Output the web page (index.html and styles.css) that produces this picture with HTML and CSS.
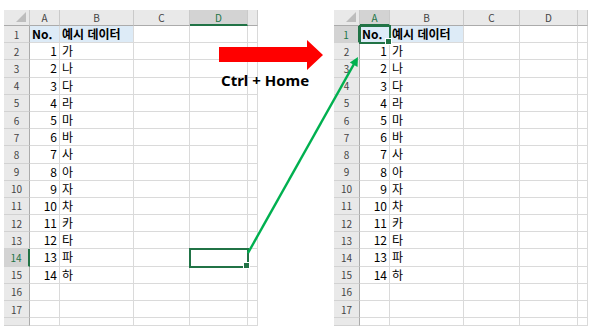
FILE: index.html
```html
<!DOCTYPE html>
<html lang="ko">
<head>
    <meta charset="UTF-8">
    <meta name="viewport" content="width=device-width, initial-scale=1.0">
    <title>Ctrl + Home</title>
    <link rel="stylesheet" href="styles.css">
</head>
<body>

<div class="stage">

    <!-- before: D14 selected -->
    <div class="sheet">
        <div class="hd corner"></div><div class="hd">A</div><div class="hd">B</div><div class="hd">C</div><div class="hd on">D</div><div class="hd"></div>
        <div class="rh">1</div><div class="c title">No.</div><div class="c title txt">예시 데이터</div><div class="c"></div><div class="c"></div><div class="c"></div>
        <div class="rh">2</div><div class="c num">1</div><div class="c txt">가</div><div class="c"></div><div class="c"></div><div class="c"></div>
        <div class="rh">3</div><div class="c num">2</div><div class="c txt">나</div><div class="c"></div><div class="c"></div><div class="c"></div>
        <div class="rh">4</div><div class="c num">3</div><div class="c txt">다</div><div class="c"></div><div class="c"></div><div class="c"></div>
        <div class="rh">5</div><div class="c num">4</div><div class="c txt">라</div><div class="c"></div><div class="c"></div><div class="c"></div>
        <div class="rh">6</div><div class="c num">5</div><div class="c txt">마</div><div class="c"></div><div class="c"></div><div class="c"></div>
        <div class="rh">7</div><div class="c num">6</div><div class="c txt">바</div><div class="c"></div><div class="c"></div><div class="c"></div>
        <div class="rh">8</div><div class="c num">7</div><div class="c txt">사</div><div class="c"></div><div class="c"></div><div class="c"></div>
        <div class="rh">9</div><div class="c num">8</div><div class="c txt">아</div><div class="c"></div><div class="c"></div><div class="c"></div>
        <div class="rh">10</div><div class="c num">9</div><div class="c txt">자</div><div class="c"></div><div class="c"></div><div class="c"></div>
        <div class="rh">11</div><div class="c num">10</div><div class="c txt">차</div><div class="c"></div><div class="c"></div><div class="c"></div>
        <div class="rh">12</div><div class="c num">11</div><div class="c txt">카</div><div class="c"></div><div class="c"></div><div class="c"></div>
        <div class="rh">13</div><div class="c num">12</div><div class="c txt">타</div><div class="c"></div><div class="c"></div><div class="c"></div>
        <div class="rh on">14</div><div class="c num">13</div><div class="c txt">파</div><div class="c"></div><div class="c sel"></div><div class="c"></div>
        <div class="rh">15</div><div class="c num">14</div><div class="c txt">하</div><div class="c"></div><div class="c"></div><div class="c"></div>
        <div class="rh">16</div><div class="c"></div><div class="c"></div><div class="c"></div><div class="c"></div><div class="c"></div>
        <div class="rh">17</div><div class="c"></div><div class="c"></div><div class="c"></div><div class="c"></div><div class="c"></div>
        <div class="rh"></div><div class="c"></div><div class="c"></div><div class="c"></div><div class="c"></div><div class="c"></div>
    </div>

    <!-- after: A1 selected -->
    <div class="sheet">
        <div class="hd corner"></div><div class="hd on">A</div><div class="hd">B</div><div class="hd">C</div><div class="hd">D</div><div class="hd"></div>
        <div class="rh on">1</div><div class="c title sel">No.</div><div class="c title txt">예시 데이터</div><div class="c"></div><div class="c"></div><div class="c"></div>
        <div class="rh">2</div><div class="c num">1</div><div class="c txt">가</div><div class="c"></div><div class="c"></div><div class="c"></div>
        <div class="rh">3</div><div class="c num">2</div><div class="c txt">나</div><div class="c"></div><div class="c"></div><div class="c"></div>
        <div class="rh">4</div><div class="c num">3</div><div class="c txt">다</div><div class="c"></div><div class="c"></div><div class="c"></div>
        <div class="rh">5</div><div class="c num">4</div><div class="c txt">라</div><div class="c"></div><div class="c"></div><div class="c"></div>
        <div class="rh">6</div><div class="c num">5</div><div class="c txt">마</div><div class="c"></div><div class="c"></div><div class="c"></div>
        <div class="rh">7</div><div class="c num">6</div><div class="c txt">바</div><div class="c"></div><div class="c"></div><div class="c"></div>
        <div class="rh">8</div><div class="c num">7</div><div class="c txt">사</div><div class="c"></div><div class="c"></div><div class="c"></div>
        <div class="rh">9</div><div class="c num">8</div><div class="c txt">아</div><div class="c"></div><div class="c"></div><div class="c"></div>
        <div class="rh">10</div><div class="c num">9</div><div class="c txt">자</div><div class="c"></div><div class="c"></div><div class="c"></div>
        <div class="rh">11</div><div class="c num">10</div><div class="c txt">차</div><div class="c"></div><div class="c"></div><div class="c"></div>
        <div class="rh">12</div><div class="c num">11</div><div class="c txt">카</div><div class="c"></div><div class="c"></div><div class="c"></div>
        <div class="rh">13</div><div class="c num">12</div><div class="c txt">타</div><div class="c"></div><div class="c"></div><div class="c"></div>
        <div class="rh">14</div><div class="c num">13</div><div class="c txt">파</div><div class="c"></div><div class="c"></div><div class="c"></div>
        <div class="rh">15</div><div class="c num">14</div><div class="c txt">하</div><div class="c"></div><div class="c"></div><div class="c"></div>
        <div class="rh">16</div><div class="c"></div><div class="c"></div><div class="c"></div><div class="c"></div><div class="c"></div>
        <div class="rh">17</div><div class="c"></div><div class="c"></div><div class="c"></div><div class="c"></div><div class="c"></div>
        <div class="rh"></div><div class="c"></div><div class="c"></div><div class="c"></div><div class="c"></div><div class="c"></div>
    </div>

    <!-- red arrow + shortcut label -->
    <svg class="red-arrow" width="105" height="31" viewBox="0 0 105 31">
        <polygon points="0,7 88,7 88,0 104,15 88,30 88,22 0,22" fill="#ff0000"/>
    </svg>
    <div class="keys">Ctrl + Home</div>

    <!-- green pointer from D14 to A1 -->
    <svg class="jump" width="591" height="326" viewBox="0 0 591 326">
        <line x1="248" y1="253" x2="354" y2="64" stroke="#00b050" stroke-width="2.5"/>
        <polygon points="358,57 357.5,67 349.8,62.6" fill="#00b050"/>
    </svg>
</div>

</body>
</html>
```

FILE: styles.css
```css
body {
    margin: 0;
    background-color: white;
}
.stage {
    position: relative;
    display: flex;
    gap: 76px;
    padding: 10px 0 0 4px;
    height: 316px;
    overflow: hidden;
}
.sheet {
    display: grid;
    grid-template-columns: 26px 30px 74px 56px 58px 10px;
    grid-template-rows: 16px repeat(17, 17.2px) 8px;
    font-family: "Noto Sans CJK KR", "Noto Sans", sans-serif;
    color: black;
}

/* column / row headers */
.hd, .rh {
    display: flex;
    align-items: center;
    justify-content: center;
    background-color: #e9e9e9;
    color: #444;
    font-size: 10px;
    box-sizing: border-box;
}
.hd {
    border-right: 1px solid #cacaca;
    border-bottom: 1px solid #ababab;
}
.rh {
    border-right: 1px solid #ababab;
    border-bottom: 1px solid #d2d2d2;
}
.hd.on {
    background-color: #d3d3d3;
    color: #217346;
    border-bottom: 2px solid #217346;
}
.rh.on {
    background-color: #d3d3d3;
    color: #217346;
    border-right: 2px solid #217346;
}
.corner {
    position: relative;
}
.corner::after {
    content: "";
    position: absolute;
    right: 3px;
    bottom: 3px;
    border-left: 10px solid transparent;
    border-bottom: 10px solid #bdbdbd;
}

/* cells */
.c {
    box-sizing: border-box;
    border-right: 1px solid #dadada;
    border-bottom: 1px solid #dadada;
    font-size: 12px;
    line-height: 16px;
    padding: 0 2px;
    white-space: nowrap;
    overflow: hidden;
}
.num {
    text-align: right;
}
.title {
    background-color: #ddebf7;
    font-weight: bold;
}
.sel {
    position: relative;
    overflow: visible;
    outline: 2px solid #217346;
    outline-offset: -1px;
}
.sel::after {
    content: "";
    position: absolute;
    right: -3px;
    bottom: -3px;
    width: 5px;
    height: 5px;
    background-color: #217346;
    border: 1px solid white;
}

/* annotations */
.red-arrow {
    position: absolute;
    left: 219px;
    top: 40px;
}
.keys {
    position: absolute;
    left: 221px;
    top: 72px;
    font-family: "Noto Sans", sans-serif;
    font-weight: bold;
    font-size: 15px;
    line-height: 16px;
}
.jump {
    position: absolute;
    left: 0;
    top: 0;
}
```
